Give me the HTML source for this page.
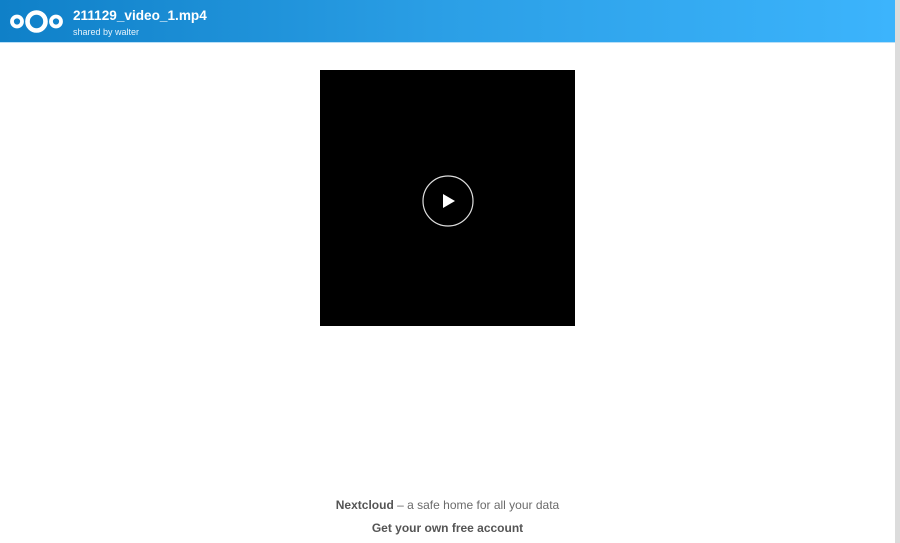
<!DOCTYPE html>
<html><head><meta charset="utf-8"><style>
html,body{margin:0;padding:0;width:900px;height:543px;overflow:hidden;background:#fff;font-family:"Liberation Sans",sans-serif}
#hdr{position:absolute;left:0;top:0;width:895px;height:42px;background:linear-gradient(90deg,#0f80c8,#2b9fe6 50%,#3cb4fc);border-bottom:1px solid #b9dff7}
#sb{position:absolute;left:895px;top:0;width:5px;height:543px;background:#dcdcdc}
.t{position:absolute;left:73px;top:8px;color:#fff;font-weight:bold;font-size:13.6px}
.s{position:absolute;left:73px;top:27px;color:#e6f3fc;font-size:9px}
#v{position:absolute;left:320px;top:70px;width:255px;height:256px;background:#000}
#f1{position:absolute;top:498px;width:895px;text-align:center;font-size:12px;color:#6b6b6b}
#f2{position:absolute;top:521px;width:895px;text-align:center;font-size:12px;color:#555;font-weight:bold}
</style></head><body>
<div id="hdr">
<svg style="position:absolute;left:10px;top:9px" width="53" height="25" viewBox="0 0 53 25">
<circle cx="26.5" cy="12.5" r="9" fill="none" stroke="#fff" stroke-width="4.6"/>
<circle cx="7" cy="12.5" r="5" fill="none" stroke="#fff" stroke-width="3.8"/>
<circle cx="46" cy="12.5" r="5" fill="none" stroke="#fff" stroke-width="3.8"/>
</svg>
<div class="t">211129_video_1.mp4</div>
<div class="s">shared by walter</div>
</div>
<div id="sb"></div>
<div id="v">
<svg style="position:absolute;left:101px;top:104px" width="54" height="54" viewBox="0 0 54 54">
<circle cx="27" cy="27" r="25" fill="none" stroke="#ddd" stroke-width="1.2"/>
<path d="M22 20 L34 27 L22 34 Z" fill="#fff"/>
</svg>
</div>
<div id="f1"><b style="color:#555">Nextcloud</b> – a safe home for all your data</div>
<div id="f2">Get your own free account</div>
</body></html>
